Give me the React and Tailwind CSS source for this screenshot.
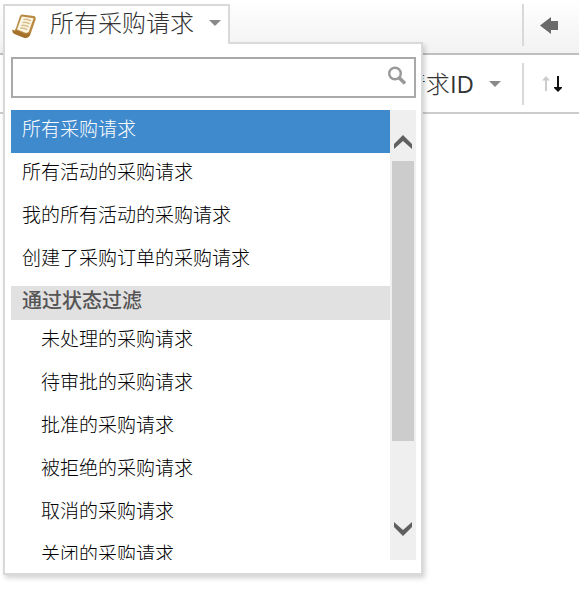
import React, { useRef, useState } from 'react';

const FILTERS = [
  { id: 'all', label: '所有采购请求' },
  { id: 'open', label: '所有活动的采购请求' },
  { id: 'mine', label: '我的所有活动的采购请求' },
  { id: 'ordered', label: '创建了采购订单的采购请求' },
];

const STATUS_FILTERS = [
  { id: 'pending', label: '未处理的采购请求' },
  { id: 'waiting', label: '待审批的采购请求' },
  { id: 'approved', label: '批准的采购请求' },
  { id: 'rejected', label: '被拒绝的采购请求' },
  { id: 'cancelled', label: '取消的采购请求' },
  { id: 'closed', label: '关闭的采购请求' },
];

const ScrollIcon = () => (
  <svg viewBox="0 0 24 24" className="size-6 shrink-0" aria-hidden="true">
    <path d="M8 2 Q8.5 .4 10 .4 L22 2 Q24.4 2.6 23.6 5.4 L18.6 20 Q17.5 23.6 14 23.8 L9 22 L1.6 18.5 L4 14 Z" fill="#b98a45" />
    <path d="M9.8 2.6 L21.6 4.2 L16.8 17.6 L14.8 19.2 L5 15.6 Z" fill="#fdf6e4" />
    <path d="M11.4 5.6 Q14.6 4.4 19 6.8 M10.4 8.6 Q13.6 7.4 18 9.8 M9.2 11.6 Q12.6 10.4 16.8 12.8 M8.4 14.2 Q11.4 13.4 15.4 15.6" fill="none" stroke="#d8bd8c" strokeWidth="1.4" />
    <path d="M.4 15.4 Q-.4 19 3 20.2 L12.4 24 Q17.6 24.4 18.4 18.4 Q16.4 20.4 14.8 18.6 L14.2 20.4 L5 16.6 Q2.2 16.8 .4 15.4 Z" fill="#a4722a" />
  </svg>
);

const CaretIcon = () => (
  <svg viewBox="0 0 12 6" className="h-1.5 w-3 shrink-0" aria-hidden="true">
    <path d="M0 0 H12 L6 6 Z" fill="#8a8a8a" />
  </svg>
);

const SearchIcon = () => (
  <svg viewBox="0 0 20 20" className="size-5" fill="none" stroke="#999" aria-hidden="true">
    <circle cx="8" cy="7.5" r="5.8" strokeWidth="2.4" />
    <path d="M12.2 11.8 L18 17.5" strokeWidth="3.6" />
  </svg>
);

const BackIcon = () => (
  <svg viewBox="0 0 18 17" className="h-[17px] w-[18px]" aria-hidden="true">
    <path d="M0 8.5 L11 0 V4 H18 V13 H11 V17 Z" fill="#6b6b6b" />
  </svg>
);

const SortIcon = () => (
  <svg viewBox="0 0 20 16" className="h-4 w-5" aria-hidden="true">
    <path d="M4 0 L8 4.5 H5 V15 H3 V4.5 H0 Z" fill="#ccc" />
    <path d="M15 0 H17 V11 H20 V12 L16 16 L12 12 V11 H15 Z" fill="#111" />
  </svg>
);

const Option = ({ label, active, nested, onClick }) => (
  <li>
    <button
      type="button"
      onClick={onClick}
      className={`block h-[43px] w-full cursor-pointer pb-1 text-left text-[19px] font-light whitespace-nowrap ${nested ? 'pl-[30px]' : 'pl-[11px]'} ${active ? 'bg-[#3f8acd] text-white' : 'text-black'}`}
    >
      {label}
    </button>
  </li>
);

const FilterMenu = ({ selected, onSelect }) => {
  const [query, setQuery] = useState('');
  const listRef = useRef(null);
  const matches = (item) => item.label.includes(query.trim());
  const scrollList = (delta) => listRef.current.scrollBy({ top: delta });

  const renderOption = (item, nested) => (
    <Option
      key={item.id}
      label={item.label}
      nested={nested}
      active={item.id === selected}
      onClick={() => onSelect(item.id)}
    />
  );

  return (
    <div className="absolute top-[38px] left-0 w-[420px] border-2 border-[#d9d9d9] bg-white pt-[13px] pr-[5px] pb-[13px] pl-[6px] shadow-[2px_3px_5px_rgba(0,0,0,0.18)]">
      <label className="relative block">
        <input
          type="text"
          aria-label="搜索"
          value={query}
          onChange={(e) => setQuery(e.target.value)}
          className="block h-[41px] w-full border-2 border-[#a9a9a9] pr-9 pl-2 text-[19px] outline-none"
        />
        <span className="absolute top-[9px] right-[9px]">
          <SearchIcon />
        </span>
      </label>

      <div className="mt-3 flex h-[450px]">
        <ul ref={listRef} className="min-w-0 flex-1 overflow-hidden">
          {FILTERS.filter(matches).map((item) => renderOption(item, false))}
          <li>
            <h2 className="mt-1 h-[34px] bg-[#e1e1e1] pl-[11px] text-xl leading-[30px] font-medium text-[#555]">通过状态过滤</h2>
            <ul>{STATUS_FILTERS.filter(matches).map((item) => renderOption(item, true))}</ul>
          </li>
        </ul>

        {/* Scrollbar */}
        <div className="flex w-[26px] shrink-0 flex-col bg-[#efefef] px-0.5 pt-6 pb-6">
          <button type="button" aria-label="向上滚动" className="flex h-[27px] shrink-0 justify-center pt-px" onClick={() => scrollList(-43)}>
            <svg viewBox="0 0 18 14" className="h-[14px] w-[18px]" aria-hidden="true">
              <path d="M0 9 L9 0 L18 9 V14 L9 6 L0 14 Z" fill="#606060" />
            </svg>
          </button>
          <div className="h-[280px] bg-[#ccc]" />
          <button type="button" aria-label="向下滚动" className="mt-auto flex shrink-0 justify-center" onClick={() => scrollList(43)}>
            <svg viewBox="0 0 18 14" className="h-[14px] w-[18px]" aria-hidden="true">
              <path d="M0 5 L9 14 L18 5 V0 L9 8 L0 0 Z" fill="#606060" />
            </svg>
          </button>
        </div>
      </div>
    </div>
  );
};

const App = () => {
  const [open, setOpen] = useState(true);
  const [selected, setSelected] = useState('all');
  const current = [...FILTERS, ...STATUS_FILTERS].find((item) => item.id === selected);

  return (
    <div className="min-h-screen bg-white font-['Open_Sans','Noto_Sans_CJK_SC',sans-serif] text-[#333]">
      <header className="flex h-[55px] items-start justify-between border-b-2 border-[#bfbfbf] bg-linear-to-b from-white to-[#f2f2f2] pt-1 pl-[3px]">
        <div className="relative z-10">
          <button
            type="button"
            aria-expanded={open}
            onClick={() => setOpen(!open)}
            className="relative z-10 flex h-10 cursor-pointer items-center border-2 border-b-0 border-[#d9d9d9] bg-white px-[7px] pb-1"
          >
            <span className="pt-1.5"><ScrollIcon /></span>
            <span className="ml-3.5 text-2xl leading-9 font-light">{current.label}</span>
            <span className="ml-[15px]"><CaretIcon /></span>
          </button>
          {open && <FilterMenu selected={selected} onSelect={setSelected} />}
        </div>
        <div className="flex h-[42px] w-[57px] items-center border-l-2 border-[#d9d9d9] pl-4">
          <button type="button" aria-label="返回"><BackIcon /></button>
        </div>
      </header>

      <div className="flex h-[59px] items-center justify-end border-b-2 border-[#ccc]">
        <button type="button" className="flex items-center pr-[21px]">
          <span className="text-2xl leading-9 font-light whitespace-nowrap">采购请求<span className="font-normal">ID</span></span>
          <span className="ml-[15px]"><CaretIcon /></span>
        </button>
        <div className="flex h-[42px] w-[57px] items-center border-l-2 border-[#d9d9d9] pl-[18px]">
          <button type="button" aria-label="排序"><SortIcon /></button>
        </div>
      </div>
    </div>
  );
};

export default App;
